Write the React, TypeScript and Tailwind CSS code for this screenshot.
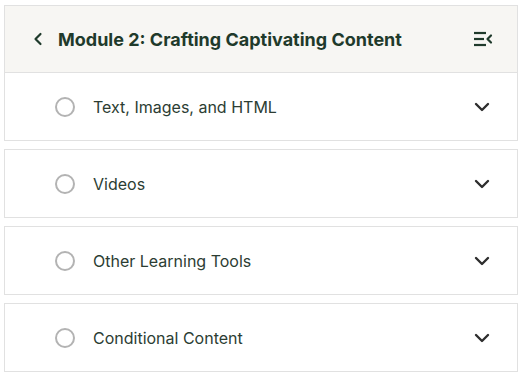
import { ChevronDown, ChevronLeft } from "lucide-react";

const LESSONS = ["Text, Images, and HTML", "Videos", "Other Learning Tools", "Conditional Content"];

function MenuCollapseIcon() {
  return (
    <svg width="20" height="16" viewBox="0 0 20 16" fill="none" stroke="#1f3a2b" strokeWidth="2.2">
      <line x1="1" y1="2" x2="13" y2="2" />
      <line x1="1" y1="8" x2="11" y2="8" />
      <line x1="1" y1="14" x2="13" y2="14" />
      <polyline points="18,4.5 14.5,8 18,11.5" strokeLinecap="round" strokeLinejoin="round" />
    </svg>
  );
}

function LessonRow({ title }: { title: string }) {
  return (
    <div className="flex h-[67px] items-center pl-[50px] pr-[23px]">
      <span className="h-5 w-5 shrink-0 rounded-full border-2 border-[#b3b3b3]" />
      <span className="ml-[18px] flex-1 text-[16px] text-[#2c3d33]">{title}</span>
      <ChevronDown size={24} strokeWidth={2.4} className="text-[#2e2e2e]" />
    </div>
  );
}

export default function App() {
  return (
    <div className="min-h-[376px] bg-white px-[4px] pt-[5px] font-['Inter',sans-serif]">
      <div className="w-[514px]">
        {/* Module card: header + first lesson */}
        <div className="border border-[#e1e1e1]">
          <div className="flex h-[67px] items-center border-b border-[#e1e1e1] bg-[#f7f6f3] pl-[23px] pr-[24px]">
            <ChevronLeft size={20} strokeWidth={2.6} className="text-[#1f3a2b]" />
            <h1 className="ml-[10px] flex-1 text-[18px] font-bold text-[#1f3a2b]">
              Module 2: Crafting Captivating Content
            </h1>
            <MenuCollapseIcon />
          </div>
          <LessonRow title={LESSONS[0]} />
        </div>

        {/* Remaining lessons */}
        <div className="mt-[8px] flex flex-col gap-[8px]">
          {LESSONS.slice(1).map((t) => (
            <div key={t} className="border border-[#e1e1e1]">
              <LessonRow title={t} />
            </div>
          ))}
        </div>
      </div>
    </div>
  );
}
